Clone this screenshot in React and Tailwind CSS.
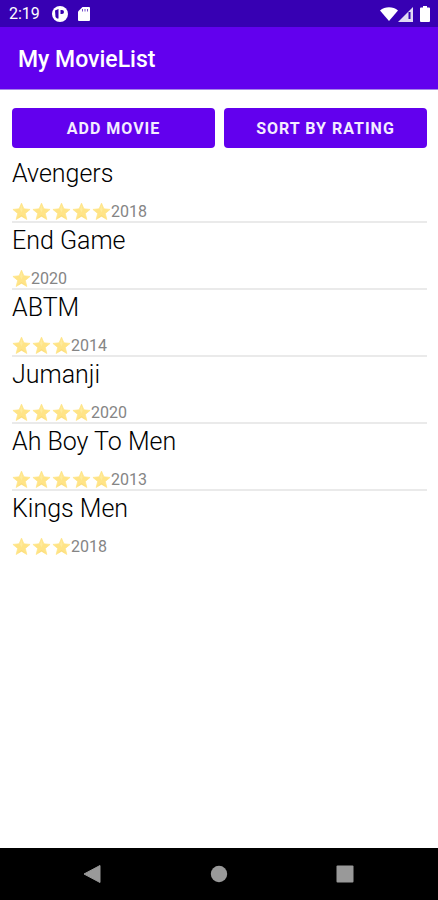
const movies = [
  { title: 'Avengers', stars: 5, year: 2018 },
  { title: 'End Game', stars: 1, year: 2020 },
  { title: 'ABTM', stars: 3, year: 2014 },
  { title: 'Jumanji', stars: 4, year: 2020 },
  { title: 'Ah Boy To Men', stars: 5, year: 2013 },
  { title: 'Kings Men', stars: 3, year: 2018 },
];

function Star() {
  return (
    <svg viewBox="0 0 20 20" className="size-[19px] shrink-0" aria-hidden="true">
      <path
        d="M10 1.200l2.500 6 6.500.6-5 4.200 1.600 6.400L10 15l-5.600 3.400L6 12 1 7.800l6.500-.6z"
        fill="#ffe487"
        strokeLinejoin="round"
        stroke="#ffe487"
        strokeWidth="0.8"
      />
      <path d="M10 3l1.200 5L10 11 8.500 8z" fill="#ffeb9c" />
      <path d="M5 17.500l5-3.700 5 3.700L10 15z" fill="#fadb7c" />
    </svg>
  );
}

function StatusBar() {
  return (
    <div className="flex h-[27px] items-center bg-[#3700b3] pl-[9px] pr-2 pt-px text-white">
      <span className="text-base leading-5">2:19</span>
      <svg viewBox="0 0 16 16" className="ml-3 size-4" aria-hidden="true">
        <circle cx="8" cy="8" r="8" fill="#fff" />
        <path d="M3 4.500L6.500 3v9.500H5L3.500 11zM8.500 4H10a2 2 0 0 1 0 4H8.500z" fill="#3700b3" />
      </svg>
      <svg viewBox="0 0 12 16" className="ml-2.5 h-4 w-3" aria-hidden="true">
        <path d="M4.500 1H11a1 1 0 0 1 1 1v12a1 1 0 0 1-1 1H1a1 1 0 0 1-1-1V5.500z" fill="#fff" />
        <path d="M4.500 3v2.500M7 3v2.500M9.500 3v2.500" stroke="#3700b3" strokeOpacity="0.7" />
      </svg>
      <svg viewBox="0 0 18 14" className="ml-auto h-3.5 w-[18px]" aria-hidden="true">
        <path d="M0 3.500C5-.8 13-.8 18 3.500L9 14z" fill="#fff" />
      </svg>
      <svg viewBox="0 0 15 15" className="h-[15px] w-[15px]" aria-hidden="true">
        <path d="M15 0v15H0z" fill="#fff" fillOpacity="0.85" />
        <path d="M11.500 5v7" stroke="#3700b3" strokeWidth="2" />
      </svg>
      <svg viewBox="0 0 10 16" className="ml-[7px] h-4 w-2.5" aria-hidden="true">
        <path d="M3 0h4v1.500h2a1 1 0 0 1 1 1V15a1 1 0 0 1-1 1H1a1 1 0 0 1-1-1V2.500a1 1 0 0 1 1-1h2z" fill="#fff" />
      </svg>
    </div>
  );
}

function ActionButton({ children }) {
  return (
    <button
      type="button"
      className="h-10 flex-1 rounded bg-[#6200ee] pt-0.5 text-base font-bold uppercase tracking-[1px] text-[#f4ecff]"
    >
      {children}
    </button>
  );
}

function MovieRow({ movie }) {
  return (
    <li className="border-b-2 border-[#eaeaea] last:border-b-0">
      <h2 className="text-[25px] font-light leading-9 text-black">{movie.title}</h2>
      <div className="flex h-[29px] items-end text-base leading-[18px] text-[#858585]">
        <span className="flex gap-px" role="img" aria-label={`${movie.stars} stars`}>
          {Array.from({ length: movie.stars }, (_, i) => (
            <Star key={i} />
          ))}
        </span>
        <span>{movie.year}</span>
      </div>
    </li>
  );
}

function NavBar() {
  return (
    <nav className="flex h-[52px] items-center justify-between bg-black pl-[82px] pr-[83px]">
      <button type="button" aria-label="Back">
        <svg viewBox="0 0 20 20" className="size-5">
          <path d="M18 1.500v17L2 10z" fill="#999" stroke="#999" strokeLinejoin="round" />
        </svg>
      </button>
      <button type="button" aria-label="Home">
        <svg viewBox="0 0 20 20" className="size-5">
          <circle cx="10" cy="10" r="8.200" fill="#999" />
        </svg>
      </button>
      <button type="button" aria-label="Overview">
        <svg viewBox="0 0 20 20" className="size-5">
          <rect x="1.500" y="1.500" width="17" height="17" rx="1" fill="#999" />
        </svg>
      </button>
    </nav>
  );
}

export default function App() {
  return (
    <div className="flex min-h-screen flex-col bg-white font-['Roboto',sans-serif]">
      <StatusBar />
      <header className="flex h-[63px] items-center border-b border-[#a685e8] bg-[#6200ee] px-[18px] pt-1">
        <h1 className="text-[23px] font-medium leading-7 text-white">My MovieList</h1>
      </header>
      <main className="flex-1 pl-3 pr-[11px] pt-[18px]">
        <div className="flex gap-[9px]">
          <ActionButton>Add Movie</ActionButton>
          <ActionButton>Sort by Rating</ActionButton>
        </div>
        <ul className="pt-2">
          {movies.map((m) => (
            <MovieRow key={m.title} movie={m} />
          ))}
        </ul>
      </main>
      <NavBar />
    </div>
  );
}
